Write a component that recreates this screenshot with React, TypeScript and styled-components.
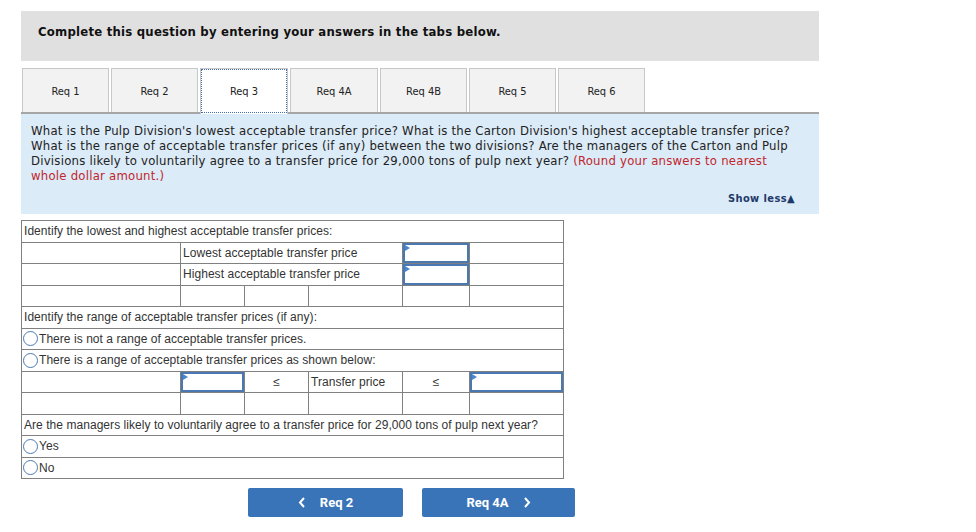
import React from "react";
import styled, { createGlobalStyle } from "styled-components";

const GlobalStyle = createGlobalStyle`
  body {
    margin: 0;
    background: #fff;
    font-family: "DejaVu Sans Condensed", "DejaVu Sans", sans-serif;
  }
`;

const Page = styled.div`
  width: 798px;
  padding: 11px 0 0 21px;
`;

const Header = styled.div`
  height: 50px;
  box-sizing: border-box;
  background: #e0e0e0;
  padding: 13px 0 0 17px;
  font-size: 13px;
  letter-spacing: 0.22px;
  font-weight: bold;
  color: #111;
`;

const TabRow = styled.div`
  display: flex;
  gap: 2px;
  margin-top: 7px;
  padding-left: 1px;
  height: 44px;
  border-bottom: 2px solid #a6a6a6;
`;

const Tab = styled.div<{ $active?: boolean; $w?: number }>`
  width: ${(p) => p.$w ?? 87}px;
  box-sizing: border-box;
  display: flex;
  align-items: center;
  justify-content: center;
  padding-top: ${(p) => (p.$active ? "0" : "2px")};
  font-size: 11px;
  color: #222;
  background: ${(p) => (p.$active ? "#fff" : "#f2f2f2")};
  border: 1px solid #c8c8c8;
  border-bottom: none;
  outline: ${(p) => (p.$active ? "1px dotted #3f6fb0" : "none")};
  outline-offset: -2px;
  margin-bottom: ${(p) => (p.$active ? "-2px" : "0")};
`;

const Question = styled.div`
  background: #dcebf8;
  padding: 9px 10px 8px 10px;
  font-size: 13px;
  letter-spacing: 0.23px;
  line-height: 15px;
  color: #222;
  white-space: nowrap;
`;

const Hint = styled.span`
  color: #c0262d;
`;

const ShowLess = styled.div`
  text-align: right;
  margin: 8px 14px 0 0;
  font-size: 11px;
  letter-spacing: 0.4px;
  font-weight: bold;
  color: #1e3a6a;
`;

const Grid = styled.table`
  margin-top: 6px;
  border-collapse: collapse;
  width: 543px;
  font-family: "Liberation Sans", Arial, sans-serif;
  font-size: 12px;
  letter-spacing: 0.05px;
  color: #333;
  table-layout: fixed;
`;

const Cell = styled.td<{ $center?: boolean }>`
  border: 1px solid #808080;
  height: 20.5px;
  padding: 0 2px;
  text-align: ${(p) => (p.$center ? "center" : "left")};
  white-space: nowrap;
  vertical-align: middle;
`;

const InputCell = styled.td`
  border: 1px solid #808080;
  padding: 0;
  height: 20.5px;
`;

const InputBox = styled.div`
  position: relative;
  height: 100%;
  min-height: 20px;
  box-sizing: border-box;
  border: 2px solid #4a78b2;
  background: #fff;
  &::before {
    content: "";
    position: absolute;
    left: 0;
    top: 0;
    border-left: 5px solid #4a86d0;
    border-top: 3px solid transparent;
    border-bottom: 3px solid transparent;
  }
`;

const RadioRow = styled.div`
  display: flex;
  align-items: center;
`;

const Radio = styled.span`
  display: inline-block;
  width: 15px;
  height: 15px;
  box-sizing: border-box;
  border-radius: 50%;
  border: 1.5px solid #4a7ab5;
  background: #fff;
  margin: 0 1px 0 -1px;
`;

const Nav = styled.div`
  display: flex;
  gap: 19px;
  margin: 9px 0 0 227px;
`;

const NavButton = styled.div<{ $w: number }>`
  width: ${(p) => p.$w}px;
  height: 29px;
  background: #3a74b8;
  border-radius: 2px;
  display: flex;
  align-items: center;
  justify-content: center;
  gap: 14px;
  font-family: Roboto, "Liberation Sans", sans-serif;
  font-weight: bold;
  font-size: 13px;
  color: #fff;
`;

const Chevron = ({ dir }: { dir: "left" | "right" }) => (
  <svg width="8" height="11" viewBox="0 0 8 11">
    <path
      d={dir === "left" ? "M6 1 L2 5.5 L6 10" : "M2 1 L6 5.5 L2 10"}
      fill="none"
      stroke="#fff"
      strokeWidth="2"
    />
  </svg>
);

const tabs = ["Req 1", "Req 2", "Req 3", "Req 4A", "Req 4B", "Req 5", "Req 6"];

const Input = () => (
  <InputCell>
    <InputBox />
  </InputCell>
);

const Empty = ({ n = 1 }: { n?: number }) => (
  <>
    {Array.from({ length: n }).map((_, i) => (
      <Cell key={i} />
    ))}
  </>
);

export default function App() {
  return (
    <Page>
      <GlobalStyle />
      <Header>Complete this question by entering your answers in the tabs below.</Header>
      <TabRow>
        {tabs.map((t, i) => (
          <Tab key={t} $active={i === 2} $w={i === 2 || i === 3 ? 88 : 87}>
            {t}
          </Tab>
        ))}
      </TabRow>
      <Question>
        What is the Pulp Division's lowest acceptable transfer price? What is the Carton
        Division's highest acceptable transfer price?
        <br />
        What is the range of acceptable transfer prices (if any) between the two divisions? Are
        the managers of the Carton and Pulp
        <br />
        Divisions likely to voluntarily agree to a transfer price for 29,000 tons of pulp next
        year? <Hint>(Round your answers to nearest</Hint>
        <br />
        <Hint>whole dollar amount.)</Hint>
        <ShowLess>Show less▲</ShowLess>
      </Question>
      <Grid>
        <colgroup>
          <col style={{ width: 159 }} />
          <col style={{ width: 64 }} />
          <col style={{ width: 64 }} />
          <col style={{ width: 94 }} />
          <col style={{ width: 67 }} />
          <col style={{ width: 94 }} />
        </colgroup>
        <tbody>
          <tr>
            <Cell colSpan={6}>Identify the lowest and highest acceptable transfer prices:</Cell>
          </tr>
          <tr>
            <Cell />
            <Cell colSpan={3}>Lowest acceptable transfer price</Cell>
            <Input />
            <Cell />
          </tr>
          <tr>
            <Cell />
            <Cell colSpan={3}>Highest acceptable transfer price</Cell>
            <Input />
            <Cell />
          </tr>
          <tr>
            <Empty n={6} />
          </tr>
          <tr>
            <Cell colSpan={6}>Identify the range of acceptable transfer prices (if any):</Cell>
          </tr>
          <tr>
            <Cell colSpan={6}>
              <RadioRow>
                <Radio />
                There is not a range of acceptable transfer prices.
              </RadioRow>
            </Cell>
          </tr>
          <tr>
            <Cell colSpan={6}>
              <RadioRow>
                <Radio />
                There is a range of acceptable transfer prices as shown below:
              </RadioRow>
            </Cell>
          </tr>
          <tr>
            <Cell />
            <Input />
            <Cell $center>≤</Cell>
            <Cell>Transfer price</Cell>
            <Cell $center>≤</Cell>
            <Input />
          </tr>
          <tr>
            <Empty n={6} />
          </tr>
          <tr>
            <Cell colSpan={6}>
              Are the managers likely to voluntarily agree to a transfer price for 29,000 tons of
              pulp next year?
            </Cell>
          </tr>
          <tr>
            <Cell colSpan={6}>
              <RadioRow>
                <Radio />
                Yes
              </RadioRow>
            </Cell>
          </tr>
          <tr>
            <Cell colSpan={6}>
              <RadioRow>
                <Radio />
                No
              </RadioRow>
            </Cell>
          </tr>
        </tbody>
      </Grid>
      <Nav>
        <NavButton $w={155}>
          <Chevron dir="left" />
          Req 2
        </NavButton>
        <NavButton $w={153}>
          Req 4A
          <Chevron dir="right" />
        </NavButton>
      </Nav>
    </Page>
  );
}
